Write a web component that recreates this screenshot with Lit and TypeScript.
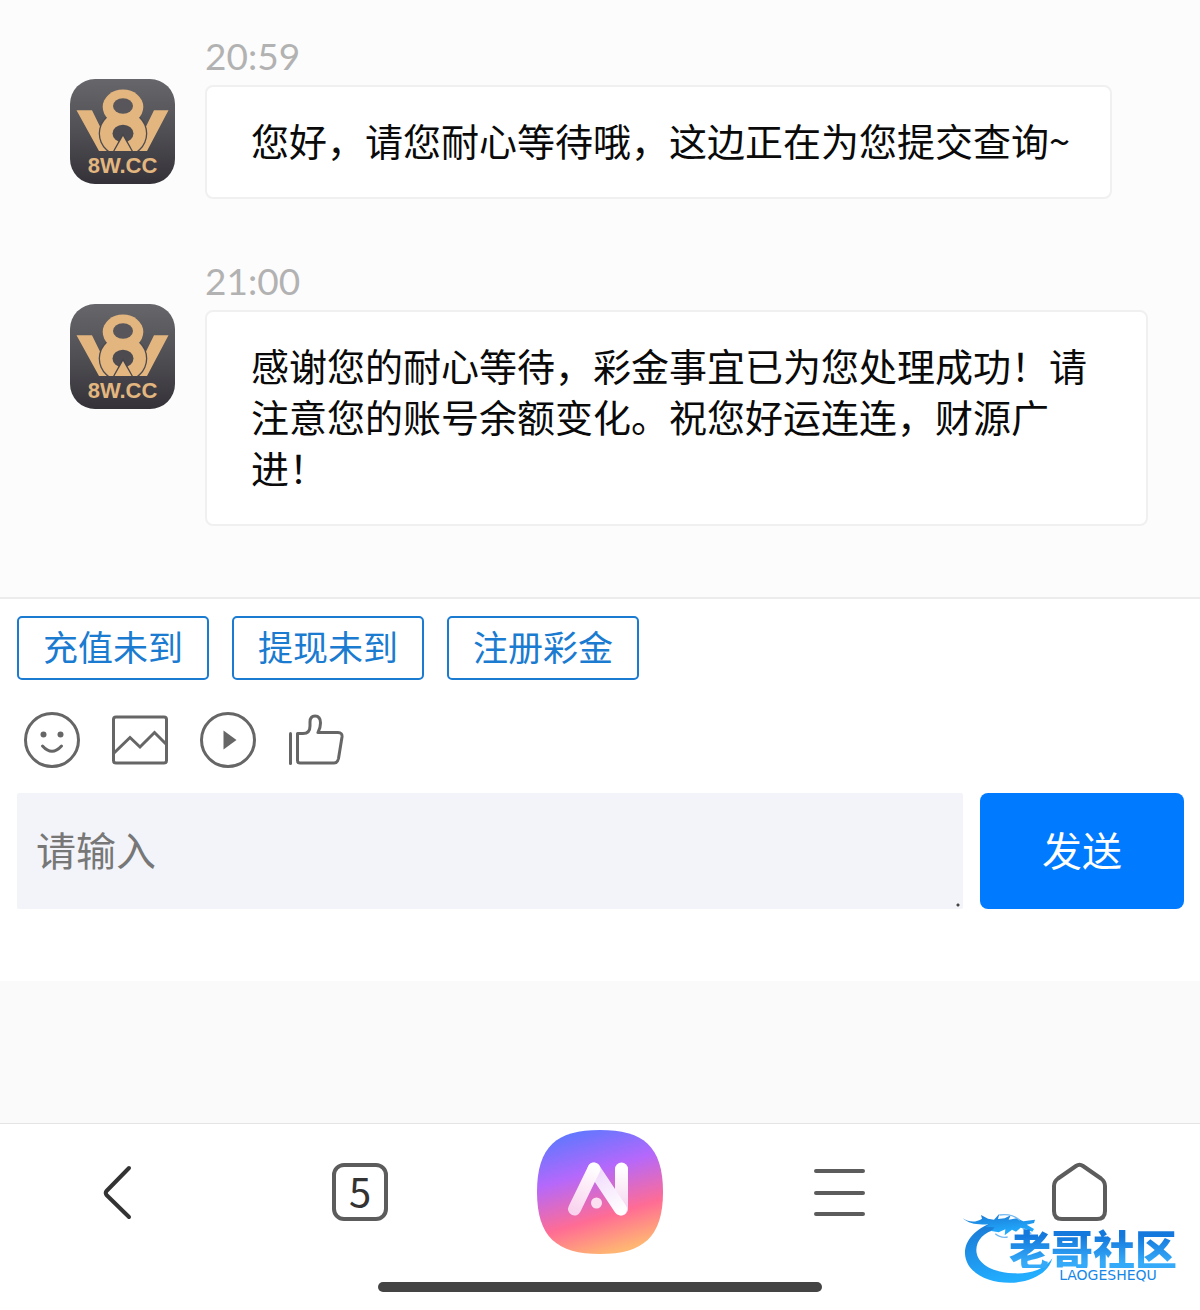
import { LitElement, html, css, svg } from "lit";
import { customElement, property } from "lit/decorators.js";

interface Message {
  time: string;
  text: string;
}

const MESSAGES: Message[] = [
  { time: "20:59", text: "您好，请您耐心等待哦，这边正在为您提交查询~" },
  {
    time: "21:00",
    text: "感谢您的耐心等待，彩金事宜已为您处理成功！请注意您的账号余额变化。祝您好运连连，财源广进！",
  },
];

const QUICK_REPLIES = ["充值未到", "提现未到", "注册彩金"];

const TOOLS = [
  {
    label: "表情",
    icon: svg`<circle cx="28" cy="28" r="26.5"/><path d="M18.5 34 Q28 44.500 37.500 34" stroke-linecap="round"/>
      <circle cx="19.500" cy="22.500" r="3" fill="#666" stroke="none"/><circle cx="36.500" cy="22.500" r="3" fill="#666" stroke="none"/>`,
  },
  {
    label: "图片",
    icon: svg`<rect x="1.500" y="5" width="53" height="46" rx="2.500"/><path d="M2 41 L18 25.500 L28 35 L42.500 20.500 L54 32"/>`,
  },
  {
    label: "视频",
    icon: svg`<circle cx="28" cy="28" r="26.500"/><path d="M23.500 18.500 L36.500 28 L23.500 37.500 Z" fill="#666" stroke="none"/>`,
  },
  {
    label: "评价",
    icon: svg`<path d="M2.500 21.500 V51.500" stroke-linecap="round"/>
      <path d="M10 21.500 H15 Q22 21.500 22 14 V10 Q22 4 27 4 Q32.500 4 32.500 11 Q32.500 16 30 20.500 H50 Q54.500 20.500 54 25 L50.500 46.500 Q49.500 51 46 51 H12 Q9.500 51 9.500 48.500 V21.500 Z" stroke-linejoin="round"/>`,
  },
];

@customElement("brand-avatar")
export class BrandAvatar extends LitElement {
  static styles = css`
    :host {
      display: block;
      width: 105px;
      height: 105px;
    }
    svg {
      display: block;
      width: 100%;
      height: 100%;
    }
    .name {
      font: bold 22px "Liberation Sans", Arial, sans-serif;
    }
  `;

  render() {
    return html`<svg viewBox="0 0 105 105" role="img" aria-label="8W.CC">
      <defs>
        <linearGradient id="shade" x1="0" y1="0" x2="0" y2="1">
          <stop offset="0" stop-color="#67666b" />
          <stop offset="0.5" stop-color="#504f54" />
          <stop offset="1" stop-color="#343238" />
        </linearGradient>
        <clipPath id="base"><rect width="105" height="72" /></clipPath>
      </defs>
      <rect width="105" height="105" rx="25" fill="url(#shade)" />
      <g clip-path="url(#base)">
        <path fill="#e3b67f" d="M6.500 31.300 H22 L42 72 H29 Z M98.500 31.300 H84 L64 72 H77 Z" />
        <ellipse cx="53" cy="54.500" rx="24.300" ry="23.500" fill="#4d4b50" />
        <ellipse cx="53" cy="54.500" rx="23" ry="22" fill="#e3b67f" />
        <ellipse cx="53" cy="28" rx="20.300" ry="17.500" fill="#e3b67f" />
        <ellipse cx="53" cy="27" rx="10" ry="7.800" fill="#58565b" />
        <ellipse cx="53" cy="54.500" rx="10.500" ry="8.800" fill="#4d4b50" />
        <path d="M53 54 L42.500 73 H63.500 Z" fill="#48464b" />
        <path d="M53 57 L44.500 72 H61.500 Z" fill="#e3b67f" />
      </g>
      <text class="name" x="52.500" y="94" text-anchor="middle" fill="#e3b67f">8W.CC</text>
    </svg>`;
  }
}

@customElement("chat-message")
export class ChatMessage extends LitElement {
  @property() time = "";
  @property() text = "";

  static styles = css`
    :host {
      display: flex;
      align-items: flex-start;
      gap: 30px;
    }
    .avatar {
      flex: none;
      margin-top: 46px;
    }
    .body {
      display: flex;
      flex-direction: column;
      align-items: flex-start;
      gap: 6px;
      min-width: 0;
    }
    time {
      font-family: Lato, sans-serif;
      font-size: 37px;
      line-height: 46px;
      color: #b2b2b2;
    }
    .bubble {
      margin: 0;
      padding: 27px 40px 32px 44px;
      border: 2px solid #f0f0f0;
      border-radius: 8px;
      background: #fff;
      font-size: 38px;
      line-height: 51px;
      color: #0a0a0a;
    }
  `;

  render() {
    return html`
      <brand-avatar class="avatar"></brand-avatar>
      <div class="body">
        <time>${this.time}</time>
        <p class="bubble">${this.text}</p>
      </div>
    `;
  }
}

@customElement("site-badge")
export class SiteBadge extends LitElement {
  static styles = css`
    :host {
      display: grid;
      grid-template-columns: 40px auto;
      width: 222px;
      color: #1687e8;
    }
    .dragon {
      grid-area: 1 / 1;
      width: 94px;
      height: 72px;
    }
    .words {
      grid-area: 1 / 2;
      display: flex;
      flex-direction: column;
      align-items: center;
      padding-top: 15px;
    }
    .title {
      font-size: 42px;
      font-weight: 900;
      line-height: 40px;
      white-space: nowrap;
      background: linear-gradient(#1478dc 20%, #35aaf8 85%);
      background-clip: text;
      color: transparent;
    }
    .latin {
      padding-left: 30px;
      font: 14px/14px "DejaVu Sans", sans-serif;
    }
  `;

  render() {
    return html`
      <svg class="dragon" viewBox="0 0 282 216" aria-hidden="true">
        <defs>
          <linearGradient id="water" x1="0" y1="0" x2="0.3" y2="1">
            <stop offset="0" stop-color="#1a76d2" />
            <stop offset="1" stop-color="#22adff" />
          </linearGradient>
        </defs>
        <path
          fill="url(#water)"
          d="M92 28 C40 48 8 82 9 122 C12 180 82 214 157 209 C214 204 261 177 271 136 C248 170 202 184 154 181 C88 178 43 150 43 111 C43 82 65 58 105 48 Z"
        />
        <path
          fill="url(#water)"
          d="M2 16 C25 30 44 27 60 17 L57 6 L78 17 L96 20 L112 2 L108 18 L128 16 L146 7 L140 20 L164 16 L184 25 L219 20 L216 30 L194 35 L216 48 L211 56 L190 48 L176 44 L162 56 L150 50 L128 67 L130 49 L110 58 L88 54 L98 43 L70 42 L84 33 C52 37 22 34 2 16 Z"
        />
        <path fill="none" stroke="#73b9f2" stroke-width="4" d="M112 6 Q150 0 174 22 M100 62 Q116 76 137 72 M182 46 L208 62" />
      </svg>
      <div class="words">
        <span class="title">老哥社区</span>
        <span class="latin">LAOGESHEQU</span>
      </div>
    `;
  }
}

@customElement("app-root")
export class AppRoot extends LitElement {
  static styles = css`
    :host {
      display: flex;
      flex-direction: column;
      position: relative;
      min-height: 100vh;
      background: #fff;
      font-family: "Noto Sans CJK SC", sans-serif;
    }
    * {
      box-sizing: border-box;
    }
    button,
    textarea {
      margin: 0;
      border: 0;
      font-family: inherit;
    }
    button {
      padding: 0;
      background: none;
      cursor: pointer;
    }
    .chat {
      display: flex;
      flex-direction: column;
      gap: 59px;
      padding: 33px 52px 71px 70px;
      background: #fcfcfc;
      border-bottom: 2px solid #ececec;
    }
    .composer {
      display: flex;
      flex-direction: column;
      padding: 17px 16px 72px 17px;
    }
    .replies {
      display: flex;
      flex-wrap: wrap;
      gap: 23px;
    }
    .reply {
      padding: 0 24px 4px;
      border: 2px solid #1a7bd0;
      border-radius: 5px;
      font-size: 35px;
      line-height: 56px;
      color: #1a7bd0;
    }
    .tools {
      display: flex;
      gap: 32px;
      padding: 32px 7px 25px;
    }
    .tool svg {
      display: block;
      width: 56px;
      height: 56px;
      fill: none;
      stroke: #666;
      stroke-width: 3;
    }
    .entry {
      display: flex;
      gap: 17px;
    }
    .input {
      flex: 1;
      min-width: 0;
      height: 116px;
      padding: 30px 19px;
      border-radius: 2px;
      outline: none;
      resize: none;
      overflow: hidden;
      background: radial-gradient(circle, #444 1px, transparent 2px) right 3px bottom 2px / 4px 4px no-repeat #f3f4f9;
      font-size: 40px;
      line-height: 52px;
      color: #111;
    }
    .input::placeholder {
      color: #777;
      opacity: 1;
    }
    .send {
      flex: 0 0 204px;
      padding-bottom: 4px;
      border-radius: 8px;
      background: #007aff;
      font-size: 40px;
      color: #fff;
    }
    .spacer {
      flex: 1;
      min-height: 100px;
      background: #fafafa;
      border-bottom: 1px solid #e4e4e4;
    }
    .nav {
      display: grid;
      grid-template-columns: repeat(5, 1fr);
      align-items: center;
      justify-items: center;
      padding: 6px 0 28px;
    }
    .nav svg {
      display: block;
      fill: none;
      stroke: #5c5c5c;
      stroke-width: 4;
      stroke-linecap: round;
      stroke-linejoin: round;
    }
    .glyph {
      width: 60px;
      height: 60px;
    }
    .ai {
      width: 126px;
      height: 124px;
    }
    .tabs {
      width: 56px;
      height: 58px;
      padding-bottom: 4px;
      border: 4px solid #5c5c5c;
      border-radius: 12px;
      font-size: 40px;
      line-height: 46px;
      color: #333;
    }
    .handle {
      align-self: center;
      width: 37%;
      height: 10px;
      margin-bottom: 18px;
      border-radius: 5px;
      background: #444;
    }
    .badge {
      position: absolute;
      right: 16px;
      bottom: 25px;
    }
  `;

  render() {
    return html`
      <main class="chat">
        ${MESSAGES.map((m) => html`<chat-message .time=${m.time} .text=${m.text}></chat-message>`)}
      </main>
      <section class="composer">
        <div class="replies">
          ${QUICK_REPLIES.map((r) => html`<button class="reply" type="button">${r}</button>`)}
        </div>
        <div class="tools">
          ${TOOLS.map(
            (t) => html`<button class="tool" type="button" aria-label=${t.label}>
              <svg viewBox="0 0 56 56" aria-hidden="true">${t.icon}</svg>
            </button>`
          )}
        </div>
        <form class="entry" @submit=${(e: Event) => e.preventDefault()}>
          <textarea class="input" rows="1" placeholder="请输入" aria-label="请输入"></textarea>
          <button class="send" type="submit">发送</button>
        </form>
      </section>
      <div class="spacer"></div>
      <nav class="nav">
        <button type="button" aria-label="返回">
          <svg class="glyph" viewBox="0 0 60 60"><path d="M39 6 L16.500 29 Q15 31 16.500 33 L39 55" style="stroke:#333" /></svg>
        </button>
        <button class="tabs" type="button">5</button>
        <button type="button" aria-label="AI">
          <svg class="ai" viewBox="0 0 126 124" stroke="none">
            <defs>
              <linearGradient id="sky" x1="0.25" y1="0" x2="0.55" y2="1">
                <stop offset="0" stop-color="#5b78ff" />
                <stop offset="0.36" stop-color="#b568fb" />
                <stop offset="0.72" stop-color="#ff6c94" />
                <stop offset="1" stop-color="#ffb573" />
              </linearGradient>
              <linearGradient id="legA" gradientUnits="userSpaceOnUse" x1="37" y1="82" x2="58" y2="36">
                <stop offset="0" stop-color="#f9d3ee" />
                <stop offset="1" stop-color="#fff" />
              </linearGradient>
              <linearGradient id="legB" gradientUnits="userSpaceOnUse" x1="58" y1="38" x2="84" y2="82">
                <stop offset="0" stop-color="#f0d8fc" />
                <stop offset="1" stop-color="#fff" />
              </linearGradient>
              <linearGradient id="legC" gradientUnits="userSpaceOnUse" x1="84" y1="38" x2="84" y2="82">
                <stop offset="0" stop-color="#fff" />
                <stop offset="1" stop-color="#f6d4ef" />
              </linearGradient>
            </defs>
            <path
              d="M63 0 C106 0 126 16 126 62 C126 107 106 124 63 124 C20 124 0 107 0 62 C0 16 20 0 63 0 Z"
              fill="url(#sky)"
              style="stroke:none"
            />
            <path d="M84.500 39 V79" style="stroke:url(#legC);stroke-width:13" />
            <path d="M57 39 L83.500 79" style="stroke:url(#legB);stroke-width:13" />
            <path d="M37.500 79 L57 39" style="stroke:url(#legA);stroke-width:13" />
            <circle cx="59.500" cy="73" r="5.500" fill="#fbe0f2" style="stroke:none" />
          </svg>
        </button>
        <button type="button" aria-label="菜单">
          <svg class="glyph" viewBox="0 0 60 60"><path d="M6 9 H53 M6 31 H53 M6 52 H53" /></svg>
        </button>
        <button type="button" aria-label="主页">
          <svg class="glyph" viewBox="0 0 60 60">
            <path
              d="M26 4 Q29.500 1.500 33 4 L51 16.500 Q55 19.500 55 24 V49 Q55 57 47 57 H12 Q4 57 4 49 V24 Q4 19.500 8 16.500 Z"
            />
          </svg>
        </button>
      </nav>
      <div class="handle"></div>
      <site-badge class="badge"></site-badge>
    `;
  }
}
